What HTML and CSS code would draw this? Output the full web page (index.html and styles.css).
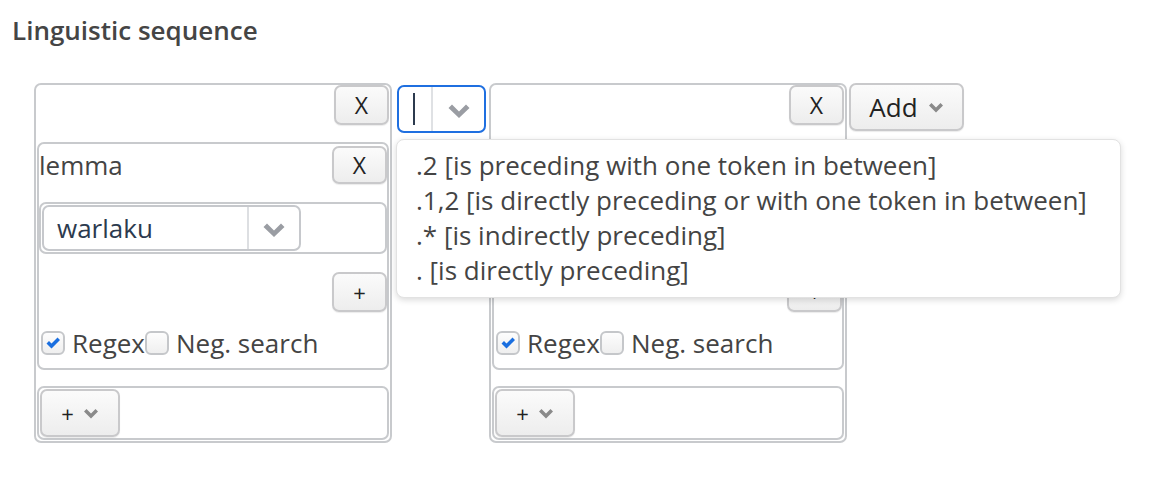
FILE: index.html
```html
<!DOCTYPE html>
<html>
<head>
<meta charset="utf-8">
<link rel="stylesheet" href="styles.css">
</head>
<body>
<h2 class="title">Linguistic sequence</h2>
<div class="seq">
  <div class="token">
    <div class="token-head"><button class="btn btn-x">X</button></div>
    <div class="attr">
      <div class="attr-head"><span class="attr-name">lemma</span><button class="btn btn-x btn-x-sm">X</button></div>
      <div class="val-box">
        <div class="select">
          <span class="select-val">warlaku</span>
          <span class="select-arrow"><svg width="24" height="16" viewBox="0 0 24 16"><path d="M1.5 5 L5 1.5 L12 8.5 L19 1.5 L22.5 5 L12 15 Z" fill="#9a9da3"/></svg></span>
        </div>
      </div>
      <div class="attr-add"><button class="btn btn-plus">+</button></div>
      <div class="checks">
        <label class="check"><span class="box on"><svg width="16" height="14" viewBox="0 0 16 14"><path d="M1.5 7.5 L4 5 L6.5 7.5 L12.5 1.5 L15 4 L6.5 12.5 Z" fill="#1a6fe0"/></svg></span>Regex</label>
        <label class="check"><span class="box"></span><span class="neg">Neg. search</span></label>
      </div>
    </div>
    <div class="token-foot"><button class="btn btn-dd">+<svg width="16" height="11" viewBox="0 0 16 11"><path d="M1 3.5 L3.5 1 L8 5.5 L12.5 1 L15 3.5 L8 10.5 Z" fill="#8a8a8a"/></svg></button></div>
  </div>

  <div class="rel">
    <div class="rel-select">
      <span class="caret"></span>
      <span class="rel-arrow"><svg width="24" height="16" viewBox="0 0 24 16"><path d="M1.5 5 L5 1.5 L12 8.5 L19 1.5 L22.5 5 L12 15 Z" fill="#9a9da3"/></svg></span>
    </div>
    <ul class="menu">
      <li>.2 [is preceding with one token in between]</li>
      <li>.1,2 [is directly preceding or with one token in between]</li>
      <li>.* [is indirectly preceding]</li>
      <li>. [is directly preceding]</li>
    </ul>
  </div>

  <div class="token">
    <div class="token-head"><button class="btn btn-x">X</button></div>
    <div class="attr">
      <div class="attr-head"><span class="attr-name">lemma</span><button class="btn btn-x btn-x-sm">X</button></div>
      <div class="val-box">
        <div class="select">
          <span class="select-val">warlaku</span>
          <span class="select-arrow"><svg width="24" height="16" viewBox="0 0 24 16"><path d="M1.5 5 L5 1.5 L12 8.5 L19 1.5 L22.5 5 L12 15 Z" fill="#9a9da3"/></svg></span>
        </div>
      </div>
      <div class="attr-add"><button class="btn btn-plus">+</button></div>
      <div class="checks">
        <label class="check"><span class="box on"><svg width="16" height="14" viewBox="0 0 16 14"><path d="M1.5 7.5 L4 5 L6.5 7.5 L12.5 1.5 L15 4 L6.5 12.5 Z" fill="#1a6fe0"/></svg></span>Regex</label>
        <label class="check"><span class="box"></span><span class="neg">Neg. search</span></label>
      </div>
    </div>
    <div class="token-foot"><button class="btn btn-dd">+<svg width="16" height="11" viewBox="0 0 16 11"><path d="M1 3.5 L3.5 1 L8 5.5 L12.5 1 L15 3.5 L8 10.5 Z" fill="#8a8a8a"/></svg></button></div>
  </div>

  <button class="btn btn-add">Add<svg width="16" height="11" viewBox="0 0 16 11"><path d="M1 3.5 L3.5 1 L8 5.5 L12.5 1 L15 3.5 L8 10.5 Z" fill="#8a8a8a"/></svg></button>
</div>
</body>
</html>
```

FILE: styles.css
```css
* { box-sizing: border-box; }
html, body { margin: 0; background: #fff; }
body {
  font-family: "Open Sans", "Noto Sans", sans-serif;
  color: #444;
  width: 1152px;
  height: 482px;
  overflow: hidden;
}
.title {
  margin: 0;
  padding: 13px 0 0 12px;
  font-size: 26px;
  line-height: 34px;
  font-weight: 600;
  color: #454545;
}
.seq {
  display: flex;
  align-items: flex-start;
  margin-top: 36px;
  padding-left: 34px;
}
.btn {
  font-family: "Open Sans", "Noto Sans", sans-serif;
  font-size: 23px;
  color: #222;
  background: linear-gradient(#fbfbfb, #ededed);
  border: 2px solid #c9c9cb;
  border-radius: 7px;
  box-shadow: 0 1px 1px rgba(0,0,0,0.08);
  padding: 0;
  display: inline-flex;
  align-items: center;
  justify-content: center;
  line-height: 1;
}
.token {
  width: 358px;
  border: 2px solid #c8cacd;
  border-radius: 7px;
  padding: 0 1px 1px 1px;
  display: flex;
  flex-direction: column;
}
.token-head {
  height: 57px;
  display: flex;
  justify-content: flex-end;
}
.btn-x { width: 55px; height: 40px; }
.btn-x-sm { height: 38px; }
.attr {
  border: 2px solid #c8cacd;
  border-radius: 7px;
  height: 228px;
  display: flex;
  flex-direction: column;
}
.attr-head {
  display: flex;
  justify-content: space-between;
  align-items: center;
  padding-top: 2px;
}
.attr-name { font-size: 26px; color: #444; line-height: 38px; }
.val-box {
  margin-top: 18px;
  height: 52px;
  border: 2px solid #c8cacd;
  border-radius: 7px;
  padding: 1px 0 0 1px;
}
.select {
  width: 259px;
  height: 46px;
  border: 2px solid #c6c8cc;
  border-radius: 7px;
  display: flex;
  align-items: center;
}
.select-val {
  flex: 1;
  font-size: 26px;
  color: #2c3a4e;
  padding-left: 13px;
  border-right: 2px solid #dddfe2;
  height: 100%;
  display: flex;
  align-items: center;
}
.select-arrow {
  width: 50px;
  display: flex;
  justify-content: center;
  padding-top: 3px;
}
.attr-add {
  margin-top: 18px;
  display: flex;
  justify-content: flex-end;
}
.btn-plus { width: 55px; height: 40px; font-size: 22px; }
.checks {
  display: flex;
  align-items: center;
  margin-top: 13px;
  padding-left: 2px;
}
.check {
  display: flex;
  align-items: center;
  font-size: 26px;
  color: #444;
}
.box {
  width: 24px;
  height: 24px;
  border: 2px solid #c5c7ca;
  border-radius: 6px;
  background: linear-gradient(#fdfdfd, #efefef);
  margin-right: 7px;
  display: inline-flex;
  align-items: center;
  justify-content: center;
}
.token-foot {
  margin-top: 16px;
  height: 54px;
  border: 2px solid #c8cacd;
  border-radius: 7px;
  padding: 1px;
}
.btn-dd {
  width: 80px;
  height: 48px;
  gap: 9px;
  font-size: 22px;
}
.rel {
  position: relative;
  margin: 2px 3px 0 5px;
}
.rel-select {
  width: 89px;
  height: 48px;
  border: 2px solid #1f6fe0;
  border-radius: 7px;
  display: flex;
  align-items: stretch;
}
.caret {
  width: 34px;
  border-right: 2px solid #dfe1e4;
  position: relative;
}
.caret::before {
  content: "";
  position: absolute;
  left: 14px;
  top: 6px;
  width: 2px;
  height: 32px;
  background: #2c3a4e;
}
.rel-arrow {
  flex: 1;
  display: flex;
  align-items: center;
  justify-content: center;
  padding-top: 3px;
}
.menu {
  position: absolute;
  left: -1px;
  top: 54px;
  width: 725px;
  margin: 0;
  padding: 8px 0 9px 19px;
  list-style: none;
  background: #fff;
  border: 1px solid #e2e2e2;
  border-radius: 8px;
  box-shadow: 0 2px 6px rgba(0,0,0,0.15);
  z-index: 5;
}
.menu li {
  font-size: 26px;
  line-height: 35px;
  color: #444;
  white-space: nowrap;
}
.btn-add {
  margin-left: 2px;
  width: 115px;
  height: 48px;
  gap: 10px;
  font-size: 26px;
}
```
